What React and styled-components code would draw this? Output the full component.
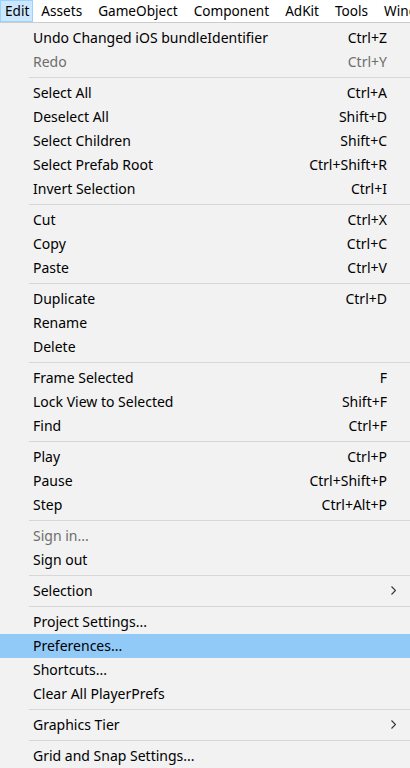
import React from "react";
import styled, { createGlobalStyle } from "styled-components";

const Global = createGlobalStyle`
  html, body { margin: 0; padding: 0; background: #f2f2f2; overflow: hidden; }
  body { font-family: "Noto Sans", "Open Sans", sans-serif; font-size: 14px; color: #000; }
`;

const Page = styled.div`
  width: 410px;
  height: 768px;
  display: flex;
  flex-direction: column;
  overflow: hidden;
`;

const MenuBar = styled.div`
  display: flex;
  align-items: stretch;
  height: 22px;
  background: #ffffff;
  white-space: nowrap;
  overflow: hidden;
`;

const BarItem = styled.div`
  display: flex;
  align-items: center;
  flex-shrink: 0;
  padding: 0 ${(p) => (p.$first ? 3 : 7)}px 1px ${(p) => (p.$first ? 4 : 7)}px;
  box-sizing: border-box;
  height: 22px;
  font-size: 13.6px;
  border: 1px solid ${(p) => (p.$active ? "#99d1ff" : "transparent")};
  background: ${(p) => (p.$active ? "#cce8ff" : "transparent")};
`;

const Menu = styled.div`
  flex: 1;
  background: #f2f2f2;
  border-top: 1px solid #cccccc;
  padding-top: 3px;
  display: flex;
  flex-direction: column;
`;

const Item = styled.div`
  display: grid;
  grid-template-columns: 1fr auto 18px;
  align-items: center;
  height: 24px;
  box-sizing: border-box;
  padding: 0 5px 1px 33px;
  font-size: 14px;
  white-space: nowrap;
  color: ${(p) => (p.$disabled ? "#6d6d6d" : "#000")};
  background: ${(p) => (p.$hover ? "#91c9f7" : "transparent")};
`;

const Shortcut = styled.span`
  text-align: right;
`;

const Arrow = styled.span`
  display: flex;
  justify-content: flex-end;
  align-items: center;
  padding-right: 9px;
`;

const Separator = styled.div`
  height: 7px;
  margin-left: 29px;
  display: flex;
  align-items: center;
  &::after {
    content: "";
    flex: 1;
    height: 1px;
    background: #d7d7d7;
  }
`;

const Chevron = () => (
  <svg width="5" height="9" viewBox="0 0 5 9">
    <path d="M0.5 0.5 L4.5 4.5 L0.5 8.5" fill="none" stroke="#333" strokeWidth="1.1" />
  </svg>
);

const items = [
  ["Undo Changed iOS bundleIdentifier", "Ctrl+Z"],
  ["Redo", "Ctrl+Y", { disabled: true }],
  "-",
  ["Select All", "Ctrl+A"],
  ["Deselect All", "Shift+D"],
  ["Select Children", "Shift+C"],
  ["Select Prefab Root", "Ctrl+Shift+R"],
  ["Invert Selection", "Ctrl+I"],
  "-",
  ["Cut", "Ctrl+X"],
  ["Copy", "Ctrl+C"],
  ["Paste", "Ctrl+V"],
  "-",
  ["Duplicate", "Ctrl+D"],
  ["Rename", ""],
  ["Delete", ""],
  "-",
  ["Frame Selected", "F"],
  ["Lock View to Selected", "Shift+F"],
  ["Find", "Ctrl+F"],
  "-",
  ["Play", "Ctrl+P"],
  ["Pause", "Ctrl+Shift+P"],
  ["Step", "Ctrl+Alt+P"],
  "-",
  ["Sign in...", "", { disabled: true }],
  ["Sign out", ""],
  "-",
  ["Selection", "", { sub: true }],
  "-",
  ["Project Settings...", ""],
  ["Preferences...", "", { hover: true }],
  ["Shortcuts...", ""],
  ["Clear All PlayerPrefs", ""],
  "-",
  ["Graphics Tier", "", { sub: true }],
  "-",
  ["Grid and Snap Settings...", ""],
];

const bar = ["Edit", "Assets", "GameObject", "Component", "AdKit", "Tools", "Window"];

export default function App() {
  return (
    <Page>
      <Global />
      <MenuBar>
        {bar.map((b, i) => (
          <BarItem key={b} $active={i === 0} $first={i === 0}>
            {b}
          </BarItem>
        ))}
      </MenuBar>
      <Menu>
        {items.map((it, i) =>
          it === "-" ? (
            <Separator key={i} />
          ) : (
            <Item key={i} $disabled={it[2]?.disabled} $hover={it[2]?.hover}>
              <span>{it[0]}</span>
              <Shortcut>{it[1]}</Shortcut>
              <Arrow>{it[2]?.sub ? <Chevron /> : null}</Arrow>
            </Item>
          )
        )}
      </Menu>
    </Page>
  );
}
